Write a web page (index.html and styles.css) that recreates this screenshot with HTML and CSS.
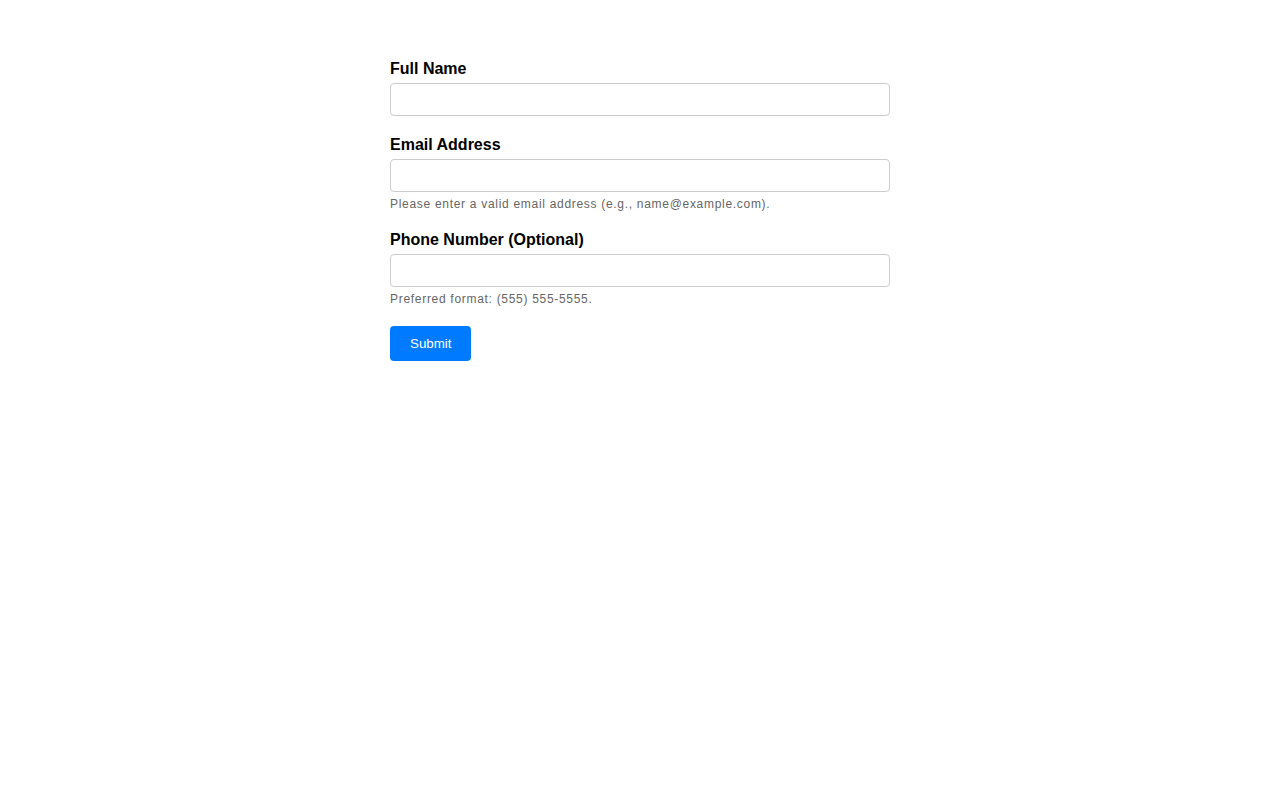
FILE: index.html
```html
<!DOCTYPE html>
<html lang="en">
<head>
    <meta charset="UTF-8">
    <meta name="viewport" content="width=device-width, initial-scale=1.0">
    <title>Contact Form</title>
    <link rel="stylesheet" href="styles.css">
</head>
<body>
    <div class="container">
        <form class="contact-form">
            <div class="form-group">
                <label for="name">Full Name</label>
                <input type="text" id="name" class="input-field">
            </div>

            <div class="form-group">
                <label for="email">Email Address</label>
                <input type="email" id="email" class="input-field">
                <small class="hint">Please enter a valid email address (e.g., name@example.com).</small>
            </div>

            <div class="form-group">
                <label for="phone">Phone Number (Optional)</label>
                <input type="tel" id="phone" class="input-field">
                <small class="hint">Preferred format: (555) 555-5555.</small>
            </div>

            <button type="submit" class="submit-button">Submit</button>
        </form>
    </div>
</body>
</html>
```

FILE: styles.css
```css
body {
    font-family: "Liberation Sans", Arial, sans-serif;
    background-color: #fff;
    margin: 0;
}
.container {
    max-width: 500px;
    margin: 40px auto;
    padding: 20px 0;
}
.form-group {
    margin-bottom: 20px;
}
.form-group label {
    display: block;
    font-size: 16px;
    font-weight: bold;
    color: #000;
    margin-bottom: 5px;
}
.input-field {
    display: block;
    width: 100%;
    padding: 8px;
    box-sizing: border-box;
    border: 1px solid #ccc;
    border-radius: 4px;
    font-family: "Liberation Sans", Arial, sans-serif;
    font-size: 13.33px;
}
.hint {
    display: block;
    margin-top: 5px;
    font-size: 12px;
    letter-spacing: 0.7px;
    color: #666;
}
.submit-button {
    background-color: #007bff;
    color: white;
    padding: 10px 20px;
    border: none;
    border-radius: 4px;
    font-family: "Liberation Sans", Arial, sans-serif;
    font-size: 13.33px;
    cursor: pointer;
}
```
